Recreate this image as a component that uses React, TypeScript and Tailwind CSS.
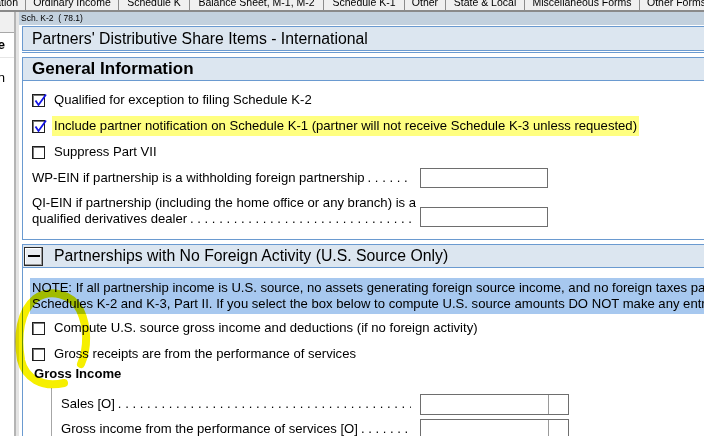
import React from "react";

const tabs = [
  { label: "Information", cls: "w-[26px] justify-end pr-[7px]" },
  { label: "Ordinary Income", cls: "w-[93px] justify-center" },
  { label: "Schedule K", cls: "w-[71px] justify-center" },
  { label: "Balance Sheet, M-1, M-2", cls: "w-[134px] justify-center" },
  { label: "Schedule K-1", cls: "w-[81px] justify-center" },
  { label: "Other", cls: "w-[41px] justify-center" },
  { label: "State & Local", cls: "w-[79px] justify-center" },
  { label: "Miscellaneous Forms", cls: "w-[115px] justify-center" },
  { label: "Other Forms", cls: "w-[80px] justify-start pl-[7px]" },
];

const DOTS = " . . . . . . . . . . . . . . . . . . . . . . . . . . . . . . . . . . . . . . . . . . . . . . . . . . . . . . . . . . . . . . . .";

function Leader() {
  return (
    <span className="flex-1 min-w-0 overflow-hidden whitespace-nowrap pl-[3px] pr-[2px]">
      {DOTS}
    </span>
  );
}

function CheckBox({ checked }: { checked?: boolean }) {
  return (
    <span className="relative w-[13px] h-[13px] shrink-0 bg-white border border-[#1e1e1e] shadow-[inset_1px_1px_0_#7a7a7a]">
      {checked && (
        <svg className="absolute -left-[1px] -top-[2px]" width="16" height="15" viewBox="0 0 16 15">
          <path d="M3.5 7.5 L6.5 12 L14 1.5" fill="none" stroke="#1414e6" strokeWidth="1.8" />
        </svg>
      )}
    </span>
  );
}

function CheckRow({
  checked,
  highlight,
  children,
}: {
  checked?: boolean;
  highlight?: boolean;
  children: React.ReactNode;
}) {
  return (
    <div className="flex items-center h-[26px] pl-[9px]">
      <CheckBox checked={checked} />
      <span
        className={`ml-[7px] px-[2px] h-[20px] leading-[20px] whitespace-nowrap ${
          highlight ? "bg-[#ffff80]" : ""
        }`}
      >
        {children}
      </span>
    </div>
  );
}

function AmountBox() {
  return (
    <div className="flex w-[149px] h-[21px] shrink-0 border border-[#6e6e6e] bg-white">
      <div className="w-[128px] border-r border-[#9a9a9a]" />
      <div className="flex-1" />
    </div>
  );
}

export default function App() {
  return (
    <div className="relative w-[704px] h-[436px] overflow-hidden bg-white text-black text-[13.1px] font-['Liberation_Sans',Arial,sans-serif]">
      {/* form tabs, scrolled so only the bottom of the labels shows */}
      <div className="h-[10px] overflow-hidden bg-[#f0f0f0]">
        <div className="flex -mt-[4px] h-[14px]">
          {tabs.map((t) => (
            <div
              key={t.label}
              className={`flex shrink-0 overflow-hidden whitespace-nowrap border-r border-[#8c8c8c] text-[10.5px] leading-[12px] ${t.cls}`}
            >
              {t.label}
            </div>
          ))}
        </div>
      </div>
      <div className="h-[2px] bg-[#8a8a8a]" />

      <div className="flex h-[424px]">
        {/* left tree, mostly scrolled away */}
        <div className="w-[14px] shrink-0 overflow-hidden">
          <div className="h-[21px] bg-[#f0f0f0] border-b border-[#a8a8a8]" />
          <div className="flex justify-end h-[25px] items-center pr-[9px] font-bold border-b border-[#e6e6e6] whitespace-nowrap">
            Schedule
          </div>
          <div className="flex justify-end h-[30px] items-end pr-[9px] whitespace-nowrap">
            Information
          </div>
        </div>
        <div className="w-[5px] shrink-0 bg-[#e4e4e4] border-l-2 border-[#b4b4b4]" />

        {/* main form */}
        <div className="flex-1 min-w-0 overflow-hidden">
          <div className="h-[13px] bg-[#c3d1de] pl-[2px] text-[8.5px] leading-[13px] whitespace-nowrap">
            Sch. K-2&nbsp;&nbsp;( 78.1)
          </div>

          <div className="w-[760px] pl-[3px] pt-[1px]">
            <div className="h-[25px] border border-[#6a9ad0] bg-[#dce6f0] pl-[9px] text-[15.8px] leading-[23px] whitespace-nowrap">
              Partners' Distributive Share Items - International
            </div>
            <div className="mt-[1px] h-px bg-[#6a9ad0]" />

            {/* General Information */}
            <div className="mt-[4px] border border-[#6a9ad0]">
              <div className="h-[23px] border-b border-[#6a9ad0] bg-[#dce6f0] pl-[9px] text-[17px] font-bold leading-[22px]">
                General Information
              </div>
              <div className="pt-[6px] pb-[12px]">
                <CheckRow checked>Qualified for exception to filing Schedule K-2</CheckRow>
                <CheckRow checked highlight>
                  Include partner notification on Schedule K-1 (partner will not receive Schedule K-3 unless requested)
                </CheckRow>
                <CheckRow>Suppress Part VII</CheckRow>

                <div className="flex items-center h-[26px] pl-[9px]">
                  <div className="flex w-[380px] whitespace-nowrap">
                    <span>WP-EIN if partnership is a withholding foreign partnership</span>
                    <Leader />
                  </div>
                  <div className="ml-[8px] w-[128px] h-[20px] border border-[#6e6e6e]" />
                </div>

                <div className="flex items-end pl-[9px] pt-[4px]">
                  <div className="w-[380px] leading-[16px] whitespace-nowrap">
                    <div>QI-EIN if partnership (including the home office or any branch) is a</div>
                    <div className="flex">
                      <span>qualified derivatives dealer</span>
                      <Leader />
                    </div>
                  </div>
                  <div className="ml-[8px] w-[128px] h-[20px] border border-[#6e6e6e]" />
                </div>
              </div>
            </div>

            {/* Partnerships with No Foreign Activity */}
            <div className="mt-[4px] border-l border-t border-[#6a9ad0] h-[300px]">
              <div className="flex items-center h-[23px] border-b border-[#6a9ad0] bg-[#dce6f0] pl-[1px]">
                <div className="flex items-center justify-center w-[19px] h-[19px] bg-[#e9edf2] border border-[#2a2a2a] shadow-[inset_-1px_-1px_0_#9a9a9a,inset_1px_1px_0_#ffffff]">
                  <div className="w-[12px] h-[2px] bg-black" />
                </div>
                <span className="ml-[11px] text-[15.8px] leading-[22px] whitespace-nowrap">
                  Partnerships with No Foreign Activity (U.S. Source Only)
                </span>
              </div>

              <div className="mt-[10px] ml-[7px] bg-[#a7c8ef] px-[2px] py-[2px] leading-[16px] whitespace-nowrap overflow-hidden">
                <div>
                  NOTE: If all partnership income is U.S. source, no assets generating foreign source income, and no foreign taxes paid or accrued, do not complete
                </div>
                <div>
                  Schedules K-2 and K-3, Part II. If you select the box below to compute U.S. source amounts DO NOT make any entries in the sections below.
                </div>
              </div>

              <div className="mt-[1px]">
                <CheckRow>Compute U.S. source gross income and deductions (if no foreign activity)</CheckRow>
                <CheckRow>Gross receipts are from the performance of services</CheckRow>
              </div>

              <div className="pl-[11px] font-bold leading-[14px]">Gross Income</div>

              <div className="mt-[7px] ml-[28px] border-l border-[#a6a6a6] pl-[9px] pt-[3px] h-[60px]">
                <div className="flex items-center h-[26px]">
                  <div className="flex w-[350px] whitespace-nowrap">
                    <span>Sales [O]</span>
                    <Leader />
                  </div>
                  <div className="ml-[9px]">
                    <AmountBox />
                  </div>
                </div>
                <div className="flex items-center h-[24px]">
                  <div className="flex w-[350px] whitespace-nowrap">
                    <span>Gross income from the performance of services [O]</span>
                    <Leader />
                  </div>
                  <div className="ml-[9px]">
                    <AmountBox />
                  </div>
                </div>
              </div>
            </div>
          </div>
        </div>
      </div>

      {/* yellow marker annotation drawn over the screenshot */}
      <svg
        className="absolute inset-0 pointer-events-none mix-blend-multiply"
        width="704"
        height="436"
        viewBox="0 0 704 436"
      >
        <path
          d="M64 383 C42 388 25 378 21 360 C17 336 20 311 35 299 C50 288 72 294 80 310 C88 327 88 348 81 364"
          fill="none"
          stroke="#f6ef00"
          strokeWidth="8"
          strokeLinecap="round"
        />
      </svg>
    </div>
  );
}
